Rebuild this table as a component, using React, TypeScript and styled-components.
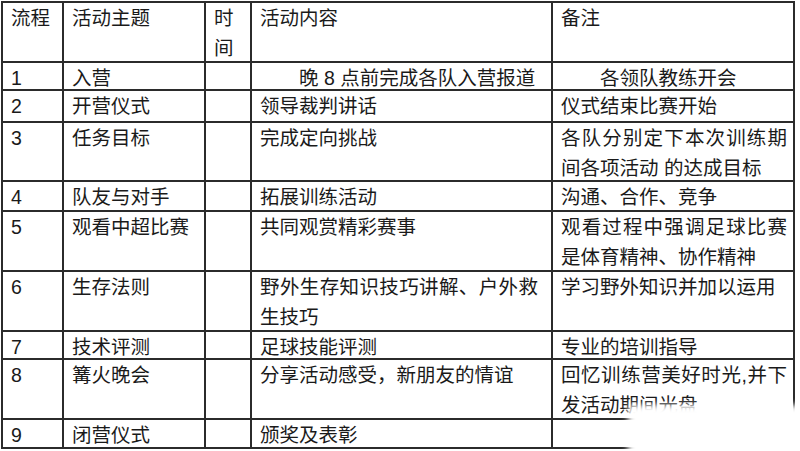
import React from "react";
import styled, { createGlobalStyle } from "styled-components";

type TRow = {
  no: string;
  theme: string;
  time?: string;
  content: string;
  note: string;
  h: number;
};

const rows: TRow[] = [
  { no: "流程", theme: "活动主题", time: "时间", content: "活动内容", note: "备注", h: 58 },
  { no: "1", theme: "入营", content: "\u3000\u3000晚 8 点前完成各队入营报道", note: "\u3000\u3000各领队教练开会", h: 26 },
  { no: "2", theme: "开营仪式", content: "领导裁判讲话", note: "仪式结束比赛开始", h: 30 },
  { no: "3", theme: "任务目标", content: "完成定向挑战", note: "各队分别定下本次训练期间各项活动 的达成目标", h: 57 },
  { no: "4", theme: "队友与对手", content: "拓展训练活动", note: "沟通、合作、竞争", h: 28 },
  { no: "5", theme: "观看中超比赛", content: "共同观赏精彩赛事", note: "观看过程中强调足球比赛是体育精神、协作精神", h: 58 },
  { no: "6", theme: "生存法则", content: "野外生存知识技巧讲解、户外救生技巧", note: "学习野外知识并加以运用", h: 58 },
  { no: "7", theme: "技术评测", content: "足球技能评测", note: "专业的培训指导", h: 26 },
  { no: "8", theme: "篝火晚会", content: "分享活动感受，新朋友的情谊", note: "回忆训练营美好时光,并下发活动期间光盘", h: 58 },
  { no: "9", theme: "闭营仪式", content: "颁奖及表彰", note: "", h: 27 },
];

const GlobalStyle = createGlobalStyle`
  html, body {
    margin: 0;
    padding: 0;
    background: #ffffff;
  }
  body {
    font-family: "Liberation Sans", "Noto Sans CJK SC", sans-serif;
  }
`;

const StyledPage = styled.div`
  position: relative;
  width: 800px;
  height: 451px;
  padding: 1px 0 0 1px;
  box-sizing: border-box;
  overflow: hidden;
  background: #ffffff;
`;

const StyledTable = styled.div<{ $rows: string }>`
  display: grid;
  width: 794px;
  grid-template-columns: 59px 140px 44px 299px 240px;
  grid-template-rows: ${(p) => p.$rows};
  gap: 2px;
  padding: 2px;
  box-sizing: border-box;
  background: #2b2b2b;
`;

const StyledCell = styled.div<{ $padRight?: number }>`
  background: #ffffff;
  padding: 0 ${(p) => p.$padRight ?? 6}px 0 8px;
  color: #1a1a1a;
  font-size: 19.5px;
  line-height: 30px;
  text-align: justify;
  word-break: break-all;
`;

// the blurry white watermark patch in the bottom right corner
const StyledFade = styled.div`
  position: absolute;
  right: -6px;
  bottom: -6px;
  width: 178px;
  height: 52px;
  background: #ffffff;
  filter: blur(3px);
`;

function App() {
  const template = rows.map((r) => `${r.h}px`).join(" ");

  return (
    <>
      <GlobalStyle />
      <StyledPage>
        <StyledTable $rows={template}>
          {rows.map((r, i) => (
            <React.Fragment key={i}>
              <StyledCell>{r.no}</StyledCell>
              <StyledCell>{r.theme}</StyledCell>
              <StyledCell>{r.time ?? ""}</StyledCell>
              <StyledCell $padRight={13}>{r.content}</StyledCell>
              <StyledCell>{r.note}</StyledCell>
            </React.Fragment>
          ))}
        </StyledTable>
        <StyledFade />
      </StyledPage>
    </>
  );
}

export default App;
